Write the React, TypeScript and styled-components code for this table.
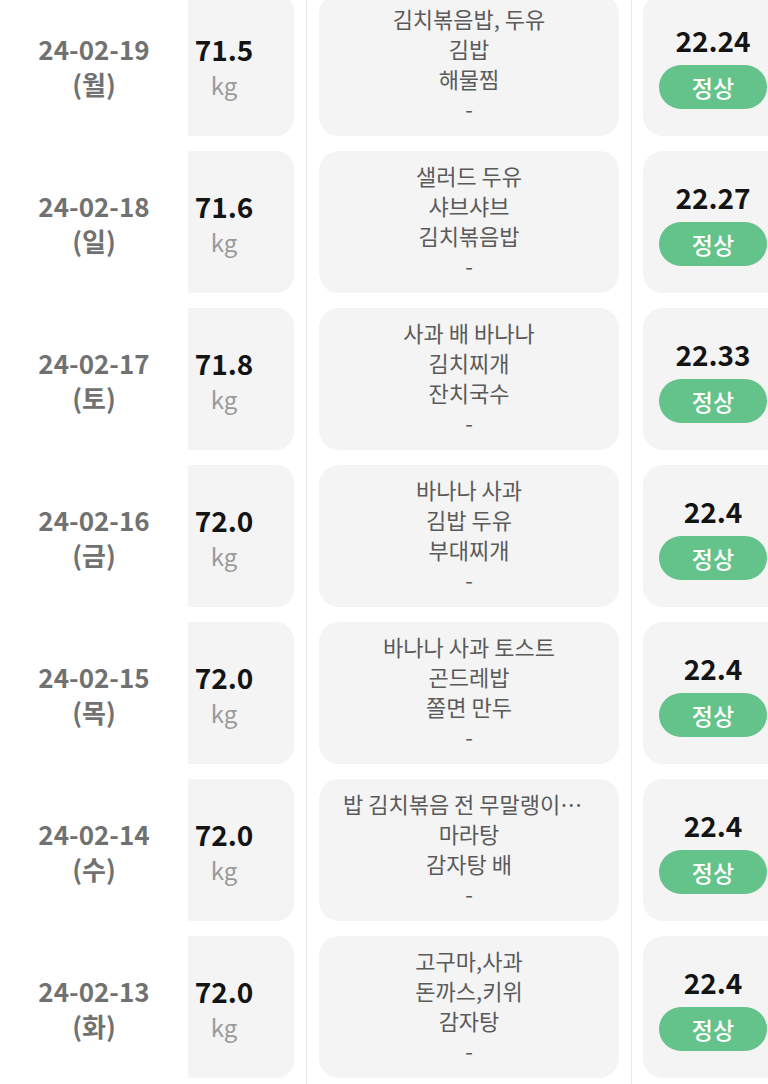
import React from 'react';
import styled, { createGlobalStyle } from 'styled-components';

type Record = {
    date: string;
    day: string;
    weight: string;
    meals: string[];
    bmi: string;
};

const records: Record[] = [
    { date: '24-02-19', day: '월', weight: '71.5', meals: ['김치볶음밥, 두유', '김밥', '해물찜', '-'], bmi: '22.24' },
    { date: '24-02-18', day: '일', weight: '71.6', meals: ['샐러드 두유', '샤브샤브', '김치볶음밥', '-'], bmi: '22.27' },
    { date: '24-02-17', day: '토', weight: '71.8', meals: ['사과 배 바나나', '김치찌개', '잔치국수', '-'], bmi: '22.33' },
    { date: '24-02-16', day: '금', weight: '72.0', meals: ['바나나 사과', '김밥 두유', '부대찌개', '-'], bmi: '22.4' },
    { date: '24-02-15', day: '목', weight: '72.0', meals: ['바나나 사과 토스트', '곤드레밥', '쫄면 만두', '-'], bmi: '22.4' },
    { date: '24-02-14', day: '수', weight: '72.0', meals: ['밥 김치볶음 전 무말랭이무침 계란', '마라탕', '감자탕 배', '-'], bmi: '22.4' },
    { date: '24-02-13', day: '화', weight: '72.0', meals: ['고구마,사과', '돈까스,키위', '감자탕', '-'], bmi: '22.4' },
];

export default function App() {
    return (
        <>
            <GlobalStyle />
            <Page>
                <List>
                    {records.map(r => (
                        <Row key={r.date}>
                            <DateCell>
                                <span>{r.date}</span>
                                <span>({r.day})</span>
                            </DateCell>
                            <WeightCard>
                                <WeightValue>{r.weight}</WeightValue>
                                <Unit>kg</Unit>
                            </WeightCard>
                            <Divider />
                            <MealCard>
                                {r.meals.map((m, i) => <MealLine key={i}>{m}</MealLine>)}
                            </MealCard>
                            <Divider />
                            <BmiCard>
                                <BmiValue>{r.bmi}</BmiValue>
                                <Badge>정상</Badge>
                            </BmiCard>
                        </Row>
                    ))}
                </List>
            </Page>
        </>
    );
}

const GlobalStyle = createGlobalStyle`
    html, body {
        margin: 0;
        padding: 0;
        background: #fff;
        font-family: "Noto Sans CJK KR", "Noto Sans", sans-serif;
    }
`

const Page = styled.div`
    width: 768px;
    height: 1084px;
    overflow: hidden;
    background: #fff;
`

const List = styled.div`
    margin-top: -13px;
    width: 800px;
`

// 날짜 | 체중 | 식단 | BMI
const Row = styled.div`
    display: grid;
    grid-template-columns: 188px 106px 25px 300px 24px 140px;
    height: 157px;
    padding: 7px 0 8px;
    box-sizing: border-box;
`

const DateCell = styled.div`
    display: flex;
    flex-direction: column;
    align-items: center;
    justify-content: center;
    padding-top: 1px;
    font-size: 26px;
    font-weight: 700;
    line-height: 35px;
    color: #717171;
`

const Card = styled.div`
    background: #f4f4f4;
    display: flex;
    flex-direction: column;
    align-items: center;
    justify-content: center;
`

const WeightCard = styled(Card)`
    border-radius: 0 18px 18px 0;
    padding-right: 34px;
    padding-top: 4px;
`

const WeightValue = styled.div`
    font-size: 28px;
    font-weight: 700;
    line-height: 35px;
    color: #141414;
`

const Unit = styled.div`
    font-size: 24px;
    line-height: 35px;
    color: #9a9a9a;
`

const Divider = styled.div`
    justify-self: center;
    align-self: stretch;
    width: 1px;
    margin: -7px 0 -8px;
    background: #e9e9e9;
`

const MealCard = styled(Card)`
    border-radius: 20px;
    padding: 0 24px 5px;
    box-sizing: border-box;
    min-width: 0;
`

const MealLine = styled.div`
    width: 100%;
    text-align: center;
    font-size: 22px;
    line-height: 30px;
    color: #5a5a5a;
    white-space: nowrap;
    overflow: hidden;
    text-overflow: ellipsis;
`

const BmiCard = styled(Card)`
    border-radius: 20px 0 0 20px;
    padding: 28px 16px 0;
    box-sizing: border-box;
    justify-content: flex-start;
`

const BmiValue = styled.div`
    font-size: 28px;
    font-weight: 700;
    line-height: 36px;
    color: #141414;
`

const Badge = styled.div`
    margin-top: 7px;
    width: 108px;
    height: 44px;
    border-radius: 22px;
    background: #64c38b;
    color: #fff;
    font-size: 23px;
    font-weight: 500;
    display: flex;
    align-items: center;
    justify-content: center;
`
